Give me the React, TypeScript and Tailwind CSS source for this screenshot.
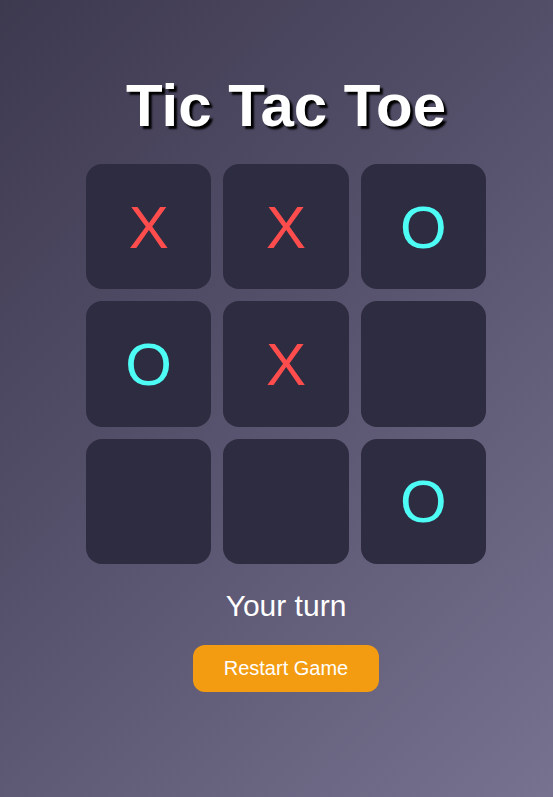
const board = ["X", "X", "O", "O", "X", "", "", "", "O"];

const Cell = ({ value }: { value: string }) => (
  <div className="flex aspect-square items-center justify-center rounded-2xl bg-[#2e2c40]">
    {value === "X" && <span className="mt-[2px] text-[60px] leading-none text-[#ff4d4d]">X</span>}
    {value === "O" && <span className="mt-[2px] text-[60px] leading-none text-[#4efcf6]">O</span>}
  </div>
);

export default function App() {
  return (
    <div className="min-h-screen bg-[linear-gradient(135deg,#3d394f_0%,#58536e_50%,#77728f_100%)] font-['Liberation_Sans',Arial,sans-serif] text-white">
      <div className="flex flex-col items-center pl-[19px] pt-[70px]">
        <h1 className="text-[60px] font-bold leading-[72px] [text-shadow:3px_3px_2px_#000]">Tic Tac Toe</h1>
        <div className="mt-[22px] grid w-[400px] grid-cols-3 gap-3">
          {board.map((v, i) => (
            <Cell key={i} value={v} />
          ))}
        </div>
        <p className="mt-[22px] text-[30px] leading-[40px]">Your turn</p>
        <button className="mt-[19px] rounded-xl bg-[#f39c12] px-[31px] py-3 text-[20px] leading-[23px] text-white">
          Restart Game
        </button>
      </div>
    </div>
  );
}
